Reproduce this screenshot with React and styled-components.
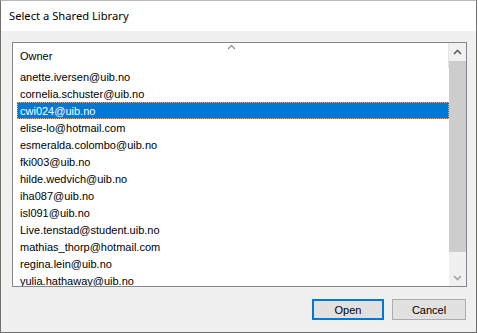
import React, { useState } from 'react'
import styled, { createGlobalStyle } from 'styled-components'

const GlobalStyle = createGlobalStyle`
  html, body { margin: 0; padding: 0; background: #ffffff; }
  body { font-family: "Liberation Sans", Arial, sans-serif; }
  * { box-sizing: border-box; }
`

const Window = styled.div`
  width: 477px;
  height: 333px;
  display: flex;
  flex-direction: column;
  border: 1px solid #6f6f6f;
  border-top-color: #b8b8b8;
  background: #f0f0f0;
`

const TitleBar = styled.div`
  height: 30px;
  flex: 0 0 30px;
  background: #ffffff;
  display: flex;
  align-items: center;
  padding-left: 8px;
  padding-bottom: 2px;
  font-family: "Noto Sans", "Open Sans", sans-serif;
  font-size: 11.2px;
  color: #000000;
`

const Body = styled.div`
  flex: 1;
  display: flex;
  flex-direction: column;
  padding: 11px 9px 12px 11px;
`

const ListBox = styled.div`
  height: 245px;
  border: 1px solid #828790;
  background: #ffffff;
  display: flex;
  overflow: hidden;
`

const Content = styled.div`
  flex: 1;
  display: flex;
  flex-direction: column;
  overflow: hidden;
`

const Header = styled.div`
  position: relative;
  height: 25px;
  flex: 0 0 25px;
  display: flex;
  align-items: center;
  padding-left: 7px;
  padding-top: 1px;
  font-size: 11px;
  color: #000000;
  border-right: 1px solid #e5e5e5;
`

const SortMark = styled.svg`
  position: absolute;
  top: 1px;
  left: 214px;
`

const Row = styled.div`
  height: 17px;
  flex: 0 0 17px;
  margin-left: 4px;
  padding-left: 2px;
  display: flex;
  align-items: center;
  font-size: 11px;
  white-space: nowrap;
  border: 1px dotted ${p => (p.$selected ? '#f0a35c' : 'transparent')};
  background: ${p => (p.$selected ? '#0078d7' : 'transparent')};
  color: ${p => (p.$selected ? '#ffffff' : '#000000')};
`

const ScrollBar = styled.div`
  width: 17px;
  flex: 0 0 17px;
  display: flex;
  flex-direction: column;
  background: #f0f0f0;
`

const ArrowBtn = styled.div`
  height: 17px;
  flex: 0 0 17px;
  display: flex;
  align-items: center;
  justify-content: center;
`

const Track = styled.div`
  flex: 1;
  display: flex;
  flex-direction: column;
  padding-top: 1px;
`

const Thumb = styled.div`
  height: 191px;
  background: #cdcdcd;
`

const ButtonRow = styled.div`
  display: flex;
  justify-content: flex-end;
  gap: 8px;
  margin-top: 12px;
  margin-right: 1px;
`

const Button = styled.button`
  width: ${p => (p.$primary ? '72px' : '74px')};
  height: 21px;
  padding: 0;
  font-family: "Liberation Sans", Arial, sans-serif;
  font-size: 11px;
  color: #000000;
  background: #e1e1e1;
  border: ${p => (p.$primary ? '2px solid #0078d7' : '1px solid #adadad')};
`

const Chevron = ({ up, color }) => (
  <svg width="9" height="6" viewBox="0 0 9 6">
    <polyline
      points={up ? '1,5 4.5,1.5 8,5' : '1,1 4.5,4.5 8,1'}
      fill="none"
      stroke={color}
      strokeWidth="1.6"
    />
  </svg>
)

const owners = [
  'anette.iversen@uib.no',
  'cornelia.schuster@uib.no',
  'cwi024@uib.no',
  'elise-lo@hotmail.com',
  'esmeralda.colombo@uib.no',
  'fki003@uib.no',
  'hilde.wedvich@uib.no',
  'iha087@uib.no',
  'isl091@uib.no',
  'Live.tenstad@student.uib.no',
  'mathias_thorp@hotmail.com',
  'regina.lein@uib.no',
  'yulia.hathaway@uib.no',
]

export default function App() {
  const [selected, setSelected] = useState('cwi024@uib.no')

  return (
    <>
      <GlobalStyle />
      <Window>
        <TitleBar>Select a Shared Library</TitleBar>
        <Body>
          <ListBox>
            <Content>
              <Header>
                Owner
                <SortMark width="9" height="6" viewBox="0 0 9 6">
                  <polyline points="1,5 4.5,1.5 8,5" fill="none" stroke="#8a8a8a" strokeWidth="1.1" />
                </SortMark>
              </Header>
              {owners.map(o => (
                <Row key={o} $selected={o === selected} onClick={() => setSelected(o)}>
                  {o}
                </Row>
              ))}
            </Content>
            <ScrollBar>
              <ArrowBtn><Chevron up color="#606060" /></ArrowBtn>
              <Track><Thumb /></Track>
              <ArrowBtn><Chevron color="#a3a3a3" /></ArrowBtn>
            </ScrollBar>
          </ListBox>
          <ButtonRow>
            <Button $primary>Open</Button>
            <Button>Cancel</Button>
          </ButtonRow>
        </Body>
      </Window>
    </>
  )
}
